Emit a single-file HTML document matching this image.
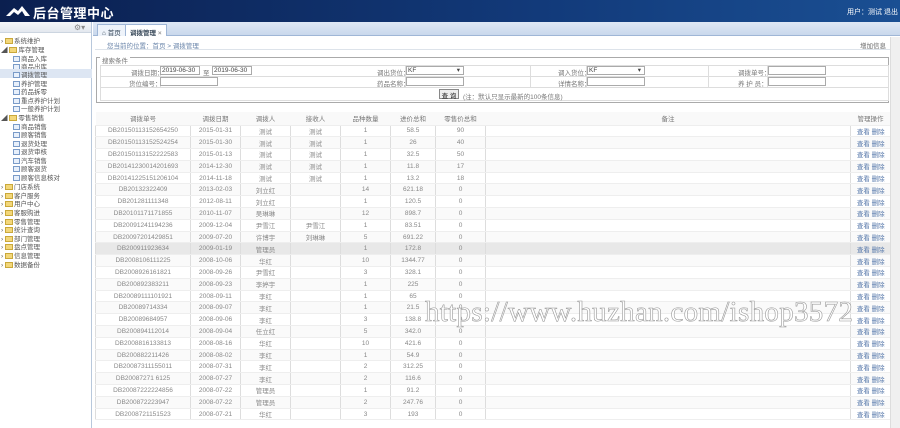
<!DOCTYPE html>
<html><head><meta charset="utf-8"><style>
*{margin:0;padding:0;box-sizing:border-box}
body{width:900px;height:428px;overflow:hidden;background:#fff;font-family:"Liberation Sans","Noto Sans CJK SC",sans-serif;font-size:7px;color:#666;position:relative}
.hd{position:absolute;left:0;top:0;width:900px;height:22px;background:linear-gradient(90deg,#0b1f4f,#123a7a 60%,#1a4f93);}
.hd .t{position:absolute;left:33px;top:3px;color:#fff;font-size:13px;font-weight:bold;letter-spacing:0.5px}
.hd .u{position:absolute;right:2px;top:7px;color:#fff;font-size:7px}
.side{position:absolute;left:0;top:22px;width:92px;height:406px;border-right:1px solid #b8c8dc;background:#fff}
.side .bar{height:11px;background:linear-gradient(#f4f6f9,#e3e8ef);border-bottom:1px solid #ccd5e0}
.it{position:absolute;font-size:6.5px;color:#555;white-space:nowrap}
.fd{display:inline-block;width:8px;height:6px;background:#f3d77a;border:1px solid #c9a83b;vertical-align:-1px;margin-right:1px}
.pg{display:inline-block;width:7px;height:6px;border:1px solid #7a9bc8;background:#e8f0fb;vertical-align:-1px;margin-right:1px}
.tabs{position:absolute;left:93px;top:22px;width:807px;height:14px;background:linear-gradient(#dfe8f5,#c9d8ec);border-bottom:1px solid #9fb6d6}
.tab{position:absolute;top:2px;height:12px;border:1px solid #9fb6d6;border-bottom:none;background:#eef3fa;font-size:6.5px;padding:2px 4px;color:#345}
.crumb{position:absolute;left:95px;top:37px;width:795px;height:13px;border-bottom:1px solid #dde3ea;font-size:6.5px;color:#6a85aa;padding:3px 0 0 12px}
fieldset{position:absolute;left:96px;top:57px;width:793px;height:46px;border:1px solid #aaa}
.fl{position:absolute;font-size:6.5px;color:#777;white-space:nowrap}
.in{position:absolute;height:9px;border:1px solid #aaa;background:#fff;font-size:6.5px;padding-left:1px;line-height:7px;color:#444}
.grid{position:absolute;left:100px;width:789px;height:0;border-top:1px solid #ddd}
table{position:absolute;left:95px;top:112px;width:795px;border-collapse:collapse;table-layout:fixed}
td,th{height:11.8px;text-align:center;font-weight:normal;font-size:6.5px;color:#888;border-left:1px solid #ddd;border-bottom:1px solid #eee;white-space:nowrap;overflow:hidden;padding:0}
th{height:13px;background:#f9f9f9;color:#777;border-left:none}
tr:nth-child(odd) td{background:#fafafa}
tr.hl td{background:#e8e8e8}
td.op{color:#5577aa}
.wm{position:absolute;left:425px;top:296px;font-family:"Liberation Serif",serif;font-size:29px;color:#fff;-webkit-text-stroke:0.6px #999;letter-spacing:0.3px;white-space:nowrap}
.sb{position:absolute;left:890px;top:37px;width:10px;height:391px;background:#f0f0f0;border-left:1px solid #ddd}
</style></head><body>
<div class="hd">
<svg style="position:absolute;left:6px;top:5px" width="24" height="12" viewBox="0 0 24 12"><path d="M0 11 L8 3 L12 6 L16 1 L24 11 L19 11 L16 6 L12 10 L8 7 L4 11Z" fill="#fff"/></svg>
<div class="t">后台管理中心</div><div class="u">用户：测试 退出</div></div>
<div class="side"><div class="bar"><span style="position:absolute;left:74px;top:1px;color:#888;font-size:8px">⚙▾</span></div></div>
<div class="it" style="left:1px;top:35px">› <span class="fd"></span>系统维护</div>
<div class="it" style="left:1px;top:44px">◢ <span class="fd"></span>库存管理</div>
<div class="it" style="left:13px;top:53px"><span class="pg"></span>商品入库</div>
<div class="it" style="left:13px;top:61px"><span class="pg"></span>商品出库</div>
<div class="it" style="left:0;top:69px;width:92px;height:9px;background:#dde6f3;padding-left:13px"><span class="pg"></span>调拨管理</div>
<div class="it" style="left:13px;top:78px"><span class="pg"></span>养护管理</div>
<div class="it" style="left:13px;top:86px"><span class="pg"></span>药品拆零</div>
<div class="it" style="left:13px;top:95px"><span class="pg"></span>重点养护计划</div>
<div class="it" style="left:13px;top:103px"><span class="pg"></span>一般养护计划</div>
<div class="it" style="left:1px;top:112px">◢ <span class="fd"></span>零售销售</div>
<div class="it" style="left:13px;top:121px"><span class="pg"></span>商品销售</div>
<div class="it" style="left:13px;top:129px"><span class="pg"></span>顾客销售</div>
<div class="it" style="left:13px;top:138px"><span class="pg"></span>退货处理</div>
<div class="it" style="left:13px;top:146px"><span class="pg"></span>退货审核</div>
<div class="it" style="left:13px;top:155px"><span class="pg"></span>汽车销售</div>
<div class="it" style="left:13px;top:163px"><span class="pg"></span>顾客退货</div>
<div class="it" style="left:13px;top:172px"><span class="pg"></span>顾客信息核对</div>
<div class="it" style="left:1px;top:181px">› <span class="fd"></span>门店系统</div>
<div class="it" style="left:1px;top:190px">› <span class="fd"></span>客户服务</div>
<div class="it" style="left:1px;top:198px">› <span class="fd"></span>用户中心</div>
<div class="it" style="left:1px;top:207px">› <span class="fd"></span>客服购进</div>
<div class="it" style="left:1px;top:216px">› <span class="fd"></span>零售管理</div>
<div class="it" style="left:1px;top:224px">› <span class="fd"></span>统计查询</div>
<div class="it" style="left:1px;top:233px">› <span class="fd"></span>部门管理</div>
<div class="it" style="left:1px;top:241px">› <span class="fd"></span>盘点管理</div>
<div class="it" style="left:1px;top:250px">› <span class="fd"></span>信息管理</div>
<div class="it" style="left:1px;top:259px">› <span class="fd"></span>数据备份</div>
<div class="tabs">
<div class="tab" style="left:4px">⌂ 首页</div>
<div class="tab" style="left:32px;background:#fff;font-weight:bold">调拨管理 <span style="color:#999">×</span></div></div>
<div class="crumb">您当前的位置：首页 &gt; 调拨管理<span style="position:absolute;right:4px;top:3px;color:#666">增加信息</span></div>
<fieldset></fieldset>
<div class="fl" style="left:100px;top:55px;background:#fff;padding:0 2px">搜索条件</div>
<div class="grid" style="top:65px"></div><div class="grid" style="top:76px"></div><div class="grid" style="top:87px"></div><div class="grid" style="top:100px"></div>
<div style="position:absolute;left:100px;top:65px;height:35px;border-left:1px solid #ddd"></div>
<div style="position:absolute;left:888px;top:65px;height:35px;border-left:1px solid #ddd"></div>
<div style="position:absolute;left:160px;top:65px;height:22px;border-left:1px solid #ddd"></div>
<div style="position:absolute;left:405px;top:65px;height:22px;border-left:1px solid #ddd"></div>
<div style="position:absolute;left:530px;top:65px;height:22px;border-left:1px solid #ddd"></div>
<div style="position:absolute;left:586px;top:65px;height:22px;border-left:1px solid #ddd"></div>
<div style="position:absolute;left:708px;top:65px;height:22px;border-left:1px solid #ddd"></div>
<div style="position:absolute;left:767px;top:65px;height:22px;border-left:1px solid #ddd"></div>
<div class="fl" style="left:131px;top:67px">调拨日期：</div>
<div class="in" style="left:160px;top:66px;width:40px">2019-06-30</div><div class="fl" style="left:203px;top:67px">至</div>
<div class="in" style="left:212px;top:66px;width:40px">2019-06-30</div>
<div class="fl" style="left:129px;top:78px">货位编号：</div><div class="in" style="left:160px;top:77px;width:58px"></div>
<div class="fl" style="left:377px;top:67px">调出货位：</div><div class="in" style="left:406px;top:66px;width:58px">KF<span style="position:absolute;right:3px">▾</span></div>
<div class="fl" style="left:377px;top:78px">药品名称：</div><div class="in" style="left:406px;top:77px;width:58px"></div>
<div class="fl" style="left:558px;top:67px">调入货位：</div><div class="in" style="left:587px;top:66px;width:58px">KF<span style="position:absolute;right:3px">▾</span></div>
<div class="fl" style="left:558px;top:78px">详情名称：</div><div class="in" style="left:587px;top:77px;width:58px"></div>
<div class="fl" style="left:738px;top:67px">调拨单号：</div><div class="in" style="left:768px;top:66px;width:58px"></div>
<div class="fl" style="left:738px;top:78px">养 护 员：</div><div class="in" style="left:768px;top:77px;width:58px"></div>
<div style="position:absolute;left:439px;top:89px;width:20px;height:10px;border:1px solid #888;background:#eee;font-size:6.5px;text-align:center;color:#222">查 询</div>
<div class="fl" style="left:463px;top:91px">(注：默认只显示最新的100条信息)</div>
<table>
<colgroup><col style="width:95px"><col style="width:50px"><col style="width:50px"><col style="width:50px"><col style="width:50px"><col style="width:45px"><col style="width:50px"><col style="width:365px"><col style="width:40px"></colgroup>
<tr><th>调拨单号</th><th>调拨日期</th><th>调拨人</th><th>接收人</th><th>品种数量</th><th>进价总和</th><th>零售价总和</th><th>备注</th><th>管理操作</th></tr>
<tr><td>DB20150113152654250</td><td>2015-01-31</td><td>测试</td><td>测试</td><td>1</td><td>58.5</td><td>90</td><td></td><td class="op">查看 删除</td></tr>
<tr><td>DB20150113152524254</td><td>2015-01-30</td><td>测试</td><td>测试</td><td>1</td><td>26</td><td>40</td><td></td><td class="op">查看 删除</td></tr>
<tr><td>DB20150113152222583</td><td>2015-01-13</td><td>测试</td><td>测试</td><td>1</td><td>32.5</td><td>50</td><td></td><td class="op">查看 删除</td></tr>
<tr><td>DB20141230014201693</td><td>2014-12-30</td><td>测试</td><td>测试</td><td>1</td><td>11.8</td><td>17</td><td></td><td class="op">查看 删除</td></tr>
<tr><td>DB20141225151206104</td><td>2014-11-18</td><td>测试</td><td>测试</td><td>1</td><td>13.2</td><td>18</td><td></td><td class="op">查看 删除</td></tr>
<tr><td>DB20132322409</td><td>2013-02-03</td><td>刘立红</td><td></td><td>14</td><td>621.18</td><td>0</td><td></td><td class="op">查看 删除</td></tr>
<tr><td>DB201281111348</td><td>2012-08-11</td><td>刘立红</td><td></td><td>1</td><td>120.5</td><td>0</td><td></td><td class="op">查看 删除</td></tr>
<tr><td>DB20101171171855</td><td>2010-11-07</td><td>吴琳琳</td><td></td><td>12</td><td>898.7</td><td>0</td><td></td><td class="op">查看 删除</td></tr>
<tr><td>DB20091241194236</td><td>2009-12-04</td><td>尹雪江</td><td>尹雪江</td><td>1</td><td>83.51</td><td>0</td><td></td><td class="op">查看 删除</td></tr>
<tr><td>DB20097201429851</td><td>2009-07-20</td><td>许博宇</td><td>刘琳琳</td><td>5</td><td>691.22</td><td>0</td><td></td><td class="op">查看 删除</td></tr>
<tr class="hl"><td>DB200911923634</td><td>2009-01-19</td><td>管理员</td><td></td><td>1</td><td>172.8</td><td>0</td><td></td><td class="op">查看 删除</td></tr>
<tr><td>DB2008106111225</td><td>2008-10-06</td><td>华红</td><td></td><td>10</td><td>1344.77</td><td>0</td><td></td><td class="op">查看 删除</td></tr>
<tr><td>DB2008926161821</td><td>2008-09-26</td><td>尹雪红</td><td></td><td>3</td><td>328.1</td><td>0</td><td></td><td class="op">查看 删除</td></tr>
<tr><td>DB200892383211</td><td>2008-09-23</td><td>李婷宇</td><td></td><td>1</td><td>225</td><td>0</td><td></td><td class="op">查看 删除</td></tr>
<tr><td>DB20089111101921</td><td>2008-09-11</td><td>李红</td><td></td><td>1</td><td>65</td><td>0</td><td></td><td class="op">查看 删除</td></tr>
<tr><td>DB20089714334</td><td>2008-09-07</td><td>李红</td><td></td><td>1</td><td>21.5</td><td>0</td><td></td><td class="op">查看 删除</td></tr>
<tr><td>DB20089684957</td><td>2008-09-06</td><td>李红</td><td></td><td>3</td><td>138.8</td><td>0</td><td></td><td class="op">查看 删除</td></tr>
<tr><td>DB200894112014</td><td>2008-09-04</td><td>任立红</td><td></td><td>5</td><td>342.0</td><td>0</td><td></td><td class="op">查看 删除</td></tr>
<tr><td>DB2008816133813</td><td>2008-08-16</td><td>华红</td><td></td><td>10</td><td>421.6</td><td>0</td><td></td><td class="op">查看 删除</td></tr>
<tr><td>DB200882211426</td><td>2008-08-02</td><td>李红</td><td></td><td>1</td><td>54.9</td><td>0</td><td></td><td class="op">查看 删除</td></tr>
<tr><td>DB20087311155011</td><td>2008-07-31</td><td>李红</td><td></td><td>2</td><td>312.25</td><td>0</td><td></td><td class="op">查看 删除</td></tr>
<tr><td>DB20087271 6125</td><td>2008-07-27</td><td>李红</td><td></td><td>2</td><td>116.6</td><td>0</td><td></td><td class="op">查看 删除</td></tr>
<tr><td>DB20087222224856</td><td>2008-07-22</td><td>管理员</td><td></td><td>1</td><td>91.2</td><td>0</td><td></td><td class="op">查看 删除</td></tr>
<tr><td>DB200872223947</td><td>2008-07-22</td><td>管理员</td><td></td><td>2</td><td>247.76</td><td>0</td><td></td><td class="op">查看 删除</td></tr>
<tr><td>DB2008721151523</td><td>2008-07-21</td><td>华红</td><td></td><td>3</td><td>193</td><td>0</td><td></td><td class="op">查看 删除</td></tr>
</table>
<div class="sb"></div>
<div class="wm">https://www.huzhan.com/ishop3572</div>
</body></html>
